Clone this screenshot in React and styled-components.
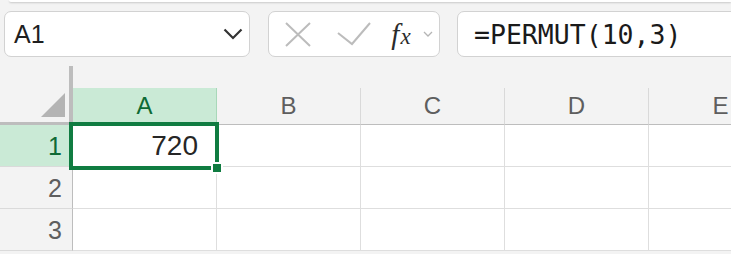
import React from 'react';
import styled, {createGlobalStyle} from 'styled-components';

const GlobalStyle = createGlobalStyle`
	html, body {
		margin: 0;
		padding: 0;
		background: #f3f3f3;
		overflow: hidden;
		font-family: "Liberation Sans", Arial, sans-serif;
	}
`;

const Page = styled.div`
	width: 731px;
	height: 254px;
	overflow: hidden;
	background: #f3f3f3;
`;

const TopStrip = styled.div`
	height: 2px;
	margin-left: 9px;
	background: #fff;
	border-bottom-left-radius: 6px;
	box-shadow: 0 1px 2px rgba(0, 0, 0, 0.18);
`;

const Toolbar = styled.div`
	display: flex;
	align-items: stretch;
	height: 46px;
	margin-top: 9px;
	padding-left: 4px;
	margin-right: -20px;
`;

const Box = styled.div`
	display: flex;
	align-items: center;
	box-sizing: border-box;
	background: #fff;
	border: 1px solid #d2d2d2;
	border-radius: 7px;
`;

const NameBox = styled(Box)`
	width: 246px;
	padding: 0 6px 0 9px;
	justify-content: space-between;
	font-size: 25px;
	color: #1f1f1f;
`;

const ButtonsBox = styled(Box)`
	width: 172px;
	margin-left: 18px;
	padding-left: 15px;
`;

const IconSlot = styled.span`
	display: flex;
	align-items: center;
	justify-content: center;
	width: ${p => p.w}px;
	margin-right: ${p => p.gap || 0}px;
`;

const Fx = styled.span`
	font-family: "Liberation Serif", "DejaVu Serif", serif;
	font-style: italic;
	font-size: 29px;
	color: #2b2b2b;
	line-height: 1;
	white-space: nowrap;

	span {
		font-size: 23px;
		margin-left: 1px;
	}
`;

const FormulaBox = styled(Box)`
	flex: 1;
	margin-left: 17px;
	padding-left: 16px;
	font-family: "DejaVu Sans Mono", "Liberation Mono", monospace;
	font-size: 26.5px;
	color: #1a1a1a;
`;

const Sheet = styled.div`
	display: grid;
	grid-template-columns: 73px repeat(5, 144px);
	grid-template-rows: 22px 37px repeat(3, 42px);
	margin-top: 9px;
`;

const Corner = styled.div`
	grid-row: 1 / 3;
	grid-column: 1;
	box-sizing: border-box;
	border-right: 4px solid #bdbdbd;
	border-bottom: 3px solid #bdbdbd;
	display: flex;
	align-items: flex-end;
	justify-content: flex-end;
	padding: 0 4px 5px 0;
`;

const ColHeader = styled.div`
	grid-row: 2;
	display: flex;
	align-items: center;
	justify-content: center;
	box-sizing: border-box;
	border-right: 1px solid ${p => p.active ? '#a8d8b9' : '#d9d9d9'};
	border-bottom: 1px solid #bdbdbd;
	background: ${p => p.active ? '#caead6' : '#f3f3f3'};
	color: ${p => p.active ? '#0e6a35' : '#5e5e5e'};
	font-size: 24px;
`;

const RowHeader = styled.div`
	grid-column: 1;
	display: flex;
	align-items: center;
	justify-content: flex-end;
	box-sizing: border-box;
	padding: 2px 10px 0 0;
	border-right: 1px solid #bdbdbd;
	border-bottom: 1px solid #dadada;
	background: ${p => p.active ? '#caead6' : '#f3f3f3'};
	color: ${p => p.active ? '#0e6a35' : '#5e5e5e'};
	font-size: 25px;
`;

const Cell = styled.div`
	position: relative;
	display: flex;
	align-items: center;
	justify-content: flex-end;
	box-sizing: border-box;
	padding-right: 18px;
	background: #fff;
	border-right: 1px solid #dedede;
	border-bottom: 1px solid #dedede;
	font-size: 28px;
	color: #262626;
`;

const Selection = styled.div`
	position: absolute;
	z-index: 2;
	left: -4px;
	top: -3px;
	right: -3px;
	bottom: -4px;
	border: 4px solid #107c41;
	pointer-events: none;
`;

const FillHandle = styled.div`
	position: absolute;
	right: -8px;
	bottom: -8px;
	width: 12px;
	height: 12px;
	box-sizing: border-box;
	background: #107c41;
	border: 2px solid #fff;
`;

const columns = ['A', 'B', 'C', 'D', 'E'];
const rows = [1, 2, 3];
const data = {A1: '720'};

const Chevron = ({size = 20, color = '#333', width = 2.2}) => (
	<svg width={size} height={size / 2 + 2} viewBox="0 0 20 12">
		<path d="M1.5 1.5 L10 10 L18.5 1.5" fill="none" stroke={color} strokeWidth={width}/>
	</svg>
);

const App = () => {
	return (
		<Page>
			<GlobalStyle/>
			<TopStrip/>
			<Toolbar>
				<NameBox>
					<span>A1</span>
					<Chevron/>
				</NameBox>
				<ButtonsBox>
					<IconSlot w={28} gap={25}>
						<svg width="28" height="25" viewBox="0 0 28 25">
							<path d="M2 1 L26 24 M26 1 L2 24" stroke="#bcbcbc" strokeWidth="2" fill="none"/>
						</svg>
					</IconSlot>
					<IconSlot w={34} gap={17}>
						<svg width="34" height="24" viewBox="0 0 34 24">
							<path d="M1 11 L15 22 L33 1" stroke="#bcbcbc" strokeWidth="2" fill="none"/>
						</svg>
					</IconSlot>
					<IconSlot w={26} gap={9}>
						<Fx>f<span>x</span></Fx>
					</IconSlot>
					<IconSlot w={10}>
						<svg width="10" height="6" viewBox="0 0 10 6">
							<path d="M1 1 L5 5 L9 1" stroke="#b5b5b5" strokeWidth="1.3" fill="none"/>
						</svg>
					</IconSlot>
				</ButtonsBox>
				<FormulaBox>=PERMUT(10,3)</FormulaBox>
			</Toolbar>
			<Sheet>
				<Corner>
					<svg width="24" height="24" viewBox="0 0 24 24">
						<polygon points="0,24 24,24 24,0" fill="#b4b4b4"/>
					</svg>
				</Corner>
				{columns.map(c => (
					<ColHeader key={c} active={c === 'A'}>{c}</ColHeader>
				))}
				{rows.map(r => (
					<React.Fragment key={r}>
						<RowHeader active={r === 1}>{r}</RowHeader>
						{columns.map(c => (
							<Cell key={c + r}>
								{data[c + r]}
								{c + r === 'A1' && (
									<Selection>
										<FillHandle/>
									</Selection>
								)}
							</Cell>
						))}
					</React.Fragment>
				))}
			</Sheet>
		</Page>
	);
};

export default App;
